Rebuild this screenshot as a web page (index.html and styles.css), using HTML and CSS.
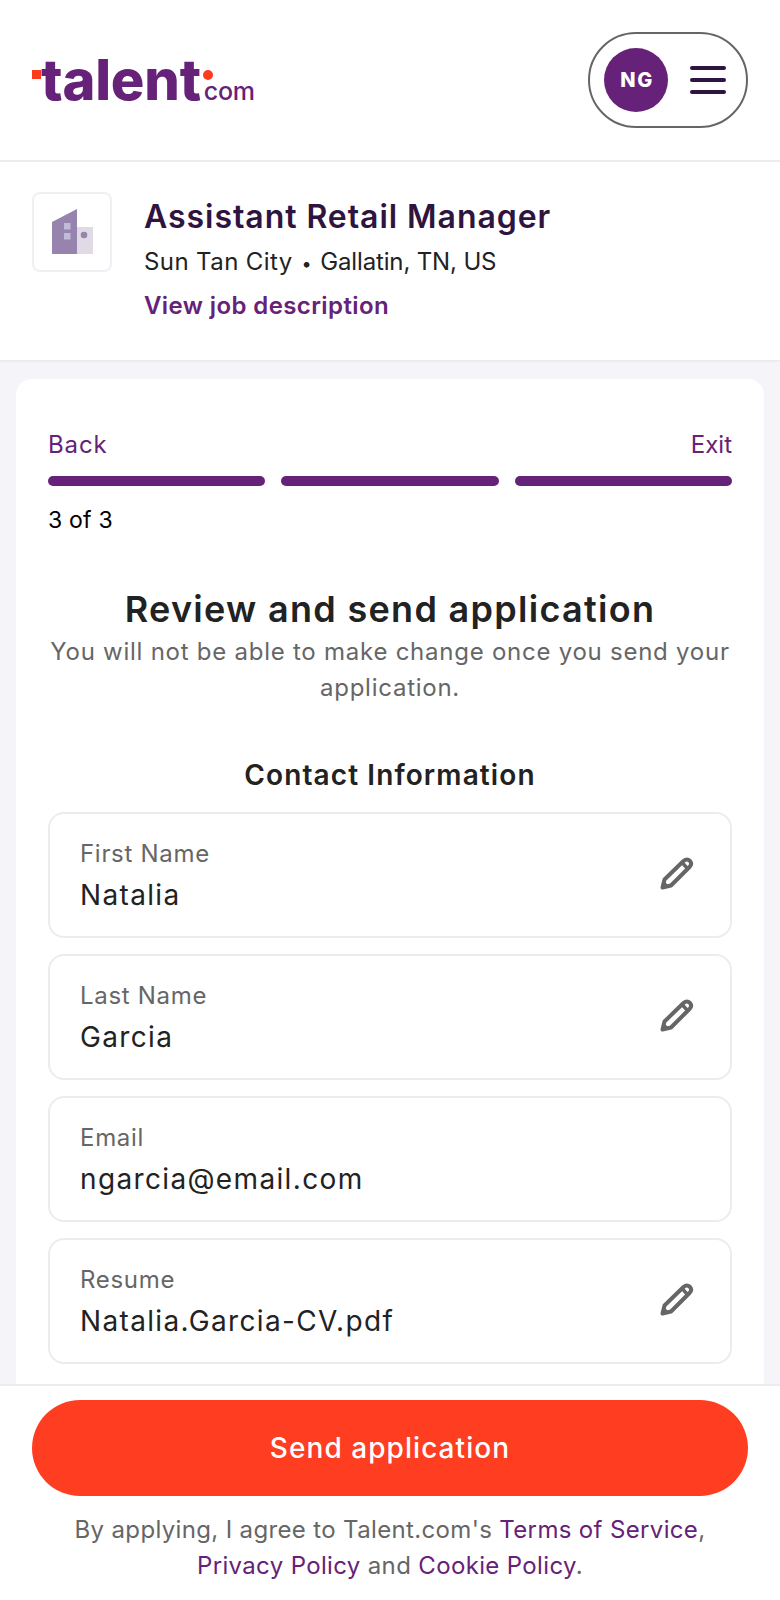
FILE: index.html
```html
<!DOCTYPE html>
<html lang="en">
<head>
    <meta charset="UTF-8">
    <meta name="viewport" content="width=device-width, initial-scale=1.0">
    <title>Review and send application - Talent.com</title>
    <link rel="stylesheet" href="styles.css">
</head>
<body>
    <header class="site-header">
        <a class="logo" href="#">
            <span class="logo-square"></span>
            <span class="logo-word">talent</span>
            <span class="logo-dot"></span>
            <span class="logo-com">com</span>
        </a>
        <div class="user-pill">
            <div class="avatar">NG</div>
            <div class="burger"><span></span><span></span><span></span></div>
        </div>
    </header>

    <section class="job">
        <div class="job-logo">
            <svg width="42" height="46" viewBox="-1 0 42 46">
                <path d="M25 0V45H0V13Z" fill="#9683ae"/>
                <rect x="25" y="18" width="16" height="27" fill="#e0dae4"/>
                <rect x="12" y="14" width="6.500" height="6.500" fill="#c2bbd8"/>
                <rect x="12" y="24" width="6.500" height="6.500" fill="#c2bbd8"/>
                <circle cx="32" cy="26" r="3.300" fill="#9683ae"/>
            </svg>
        </div>
        <div class="job-info">
            <h2>Assistant Retail Manager</h2>
            <p><span class="company">Sun Tan City</span> <span class="dot">•</span> <span class="place">Gallatin, TN, US</span></p>
            <a href="#">View job description</a>
        </div>
    </section>

    <main class="page">
        <div class="card">
            <div class="nav-row">
                <a href="#">Back</a>
                <a href="#">Exit</a>
            </div>
            <div class="steps"><span></span><span></span><span></span></div>
            <div class="step-count">3 of 3</div>

            <h1>Review and send application</h1>
            <p class="subtitle">You will not be able to make change once you send your application.</p>

            <h3>Contact Information</h3>

            <div class="fields">
                <div class="field">
                    <div>
                        <label>First Name</label>
                        <div class="value">Natalia</div>
                    </div>
                    <svg class="edit" viewBox="0 0 34 34"><use href="#pencil"/></svg>
                </div>
                <div class="field">
                    <div>
                        <label>Last Name</label>
                        <div class="value">Garcia</div>
                    </div>
                    <svg class="edit" viewBox="0 0 34 34"><use href="#pencil"/></svg>
                </div>
                <div class="field">
                    <div>
                        <label>Email</label>
                        <div class="value">ngarcia@email.com</div>
                    </div>
                </div>
                <div class="field">
                    <div>
                        <label>Resume</label>
                        <div class="value">Natalia.Garcia-CV.pdf</div>
                    </div>
                    <svg class="edit" viewBox="0 0 34 34"><use href="#pencil"/></svg>
                </div>
            </div>
        </div>
    </main>

    <footer class="send-bar">
        <button class="send-button">Send application</button>
        <p>By applying, I agree to Talent.com's <a href="#">Terms of Service</a>,<br><a href="#">Privacy Policy</a> and <a href="#">Cookie Policy</a>.</p>
    </footer>

    <svg class="defs" width="0" height="0">
        <defs>
            <g id="pencil">
                <path d="M2.500 31.500 4.500 23.500 23.500 5Q27 2 30 5 32.500 8 29.500 11L11 29.500Z" fill="none" stroke="#666" stroke-width="4" stroke-linejoin="round"/>
                <path d="M22.500 7 27.500 12.500" fill="none" stroke="#666" stroke-width="3.400"/>
                <path d="M2 32 3.500 25.500 8.500 30.500Z" fill="#666" stroke="#666" stroke-width="1.500" stroke-linejoin="round"/>
            </g>
        </defs>
    </svg>
</body>
</html>
```

FILE: styles.css
```css
* {
    margin: 0;
    padding: 0;
    box-sizing: border-box;
}

html, body {
    height: 1600px;
    overflow: hidden;
}

body {
    font-family: 'Inter', 'Noto Sans', sans-serif;
    background: #f4f4f9;
    color: #222;
    display: flex;
    flex-direction: column;
}

a {
    color: #662178;
    text-decoration: none;
}

/* header */
.site-header {
    height: 162px;
    flex-shrink: 0;
    padding: 32px;
    background: #fff;
    border-bottom: 2px solid #ececee;
    display: flex;
    align-items: center;
    justify-content: space-between;
}

.logo {
    display: flex;
    align-items: baseline;
    color: #662178;
    position: relative;
    padding-left: 9px;
}

.logo-square {
    position: absolute;
    left: 0;
    top: 20px;
    width: 9px;
    height: 9px;
    background: #ff3b1f;
}

.logo-word {
    font-weight: 800;
    font-size: 56px;
    line-height: 60px;
    letter-spacing: -0.2px;
}

.logo-dot {
    position: absolute;
    left: 171px;
    top: 20px;
    width: 10px;
    height: 10px;
    border-radius: 50%;
    background: #ff3b1f;
}

.logo-com {
    font-weight: 500;
    font-size: 25px;
    letter-spacing: -0.3px;
    margin-left: 3px;
}

.user-pill {
    width: 160px;
    height: 96px;
    border: 2px solid #666;
    border-radius: 48px;
    padding: 0 20px 0 14px;
    display: flex;
    align-items: center;
    justify-content: space-between;
}

.avatar {
    width: 64px;
    height: 64px;
    border-radius: 50%;
    background: #662178;
    color: #fff;
    font-weight: 800;
    font-size: 20px;
    letter-spacing: 1.5px;
    padding-left: 2px;
    display: flex;
    align-items: center;
    justify-content: center;
}

.burger {
    width: 36px;
    display: flex;
    flex-direction: column;
    gap: 8px;
}

.burger span {
    height: 4px;
    border-radius: 2px;
    background: #2f1440;
}

/* job summary */
.job {
    height: 200px;
    flex-shrink: 0;
    padding: 30px 32px 0;
    background: #fff;
    border-bottom: 2px solid #ececee;
    display: flex;
    gap: 32px;
}

.job-logo {
    width: 80px;
    height: 80px;
    border: 2px solid #f0eff4;
    border-radius: 8px;
    display: flex;
    align-items: center;
    justify-content: center;
}

.job-info {
    padding-top: 3px;
}

.job-info h2 {
    font-size: 32px;
    font-weight: 600;
    line-height: 44px;
    letter-spacing: 0.95px;
    color: #2f1440;
}

.job-info p {
    font-size: 24px;
    line-height: 42px;
    margin-top: 2px;
}

.job-info .company {
    letter-spacing: 0.4px;
}

.job-info .place {
    letter-spacing: -0.15px;
}

.job-info .dot {
    font-size: 18px;
    margin: 0 2px;
}

.job-info a {
    font-size: 24px;
    font-weight: 600;
    line-height: 42px;
    letter-spacing: 0.4px;
}

/* main card */
.page {
    flex: 1;
    padding: 17px 16px 0;
    overflow: hidden;
}

.card {
    background: #fff;
    border-radius: 16px 16px 0 0;
    padding: 48px 32px 0;
    height: 100%;
}

.nav-row {
    display: flex;
    justify-content: space-between;
    font-size: 24px;
    line-height: 36px;
}

.nav-row a:first-child {
    letter-spacing: 0.9px;
}

.steps {
    display: flex;
    gap: 16px;
    margin-top: 13px;
}

.steps span {
    flex: 1;
    height: 10px;
    border-radius: 5px;
    background: #662178;
}

.step-count {
    font-size: 23px;
    line-height: 36px;
    letter-spacing: 0.2px;
    margin-top: 16px;
    color: #000;
}

h1 {
    font-size: 36px;
    font-weight: 600;
    line-height: 49px;
    letter-spacing: 1.3px;
    text-align: center;
    margin-top: 47px;
}

.subtitle {
    font-size: 24px;
    line-height: 36px;
    letter-spacing: 0.75px;
    color: #666;
    text-align: center;
}

h3 {
    font-size: 28px;
    font-weight: 600;
    line-height: 40px;
    letter-spacing: 1.1px;
    text-align: center;
    margin-top: 49px;
}

.fields {
    display: flex;
    flex-direction: column;
    gap: 16px;
    margin-top: 17px;
}

.field {
    height: 126px;
    border: 2px solid #ececee;
    border-radius: 16px;
    padding: 4px 36px 0 30px;
    display: flex;
    align-items: center;
    justify-content: space-between;
}

.field label {
    display: block;
    font-size: 24px;
    line-height: 36px;
    letter-spacing: 0.7px;
    color: #666;
}

.field .value {
    font-size: 28px;
    line-height: 46px;
    letter-spacing: 1.35px;
}

.edit {
    width: 34px;
    height: 34px;
    margin-top: -8px;
}

.defs {
    position: absolute;
}

/* sticky send bar */
.send-bar {
    height: 216px;
    flex-shrink: 0;
    padding: 14px 32px 0;
    background: #fff;
    border-top: 2px solid #ececee;
    text-align: center;
}

.send-button {
    width: 100%;
    height: 96px;
    border: none;
    border-radius: 48px;
    background: #ff3d20;
    color: #fff;
    font-family: inherit;
    font-size: 28px;
    font-weight: 500;
    letter-spacing: 1.05px;
}

.send-bar p {
    font-size: 24px;
    line-height: 36px;
    letter-spacing: 0.35px;
    color: #666;
    margin-top: 16px;
}
```
